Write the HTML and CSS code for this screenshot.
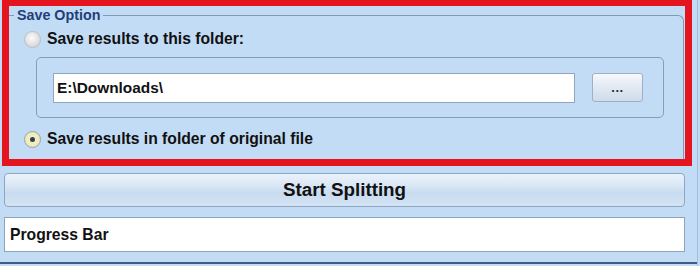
FILE: index.html
```html
<!DOCTYPE html>
<html>
<head>
<meta charset="utf-8">
<link rel="stylesheet" href="styles.css">
</head>
<body>
<div class="window">
  <div class="highlight">
    <fieldset class="group">
      <legend class="legend">Save Option</legend>
      <div class="option">
        <span class="radio"></span>
        <span class="label">Save results to this folder:</span>
      </div>
      <div class="folder-box">
        <div class="field">E:\Downloads\</div>
        <div class="browse">...</div>
      </div>
      <div class="option option-last">
        <span class="radio checked"><span class="dot"></span></span>
        <span class="label">Save results in folder of original file</span>
      </div>
    </fieldset>
  </div>
  <div class="start">Start Splitting</div>
  <div class="progress">Progress Bar</div>
  <div class="window-edge"></div>
</div>
</body>
</html>
```
FILE: styles.css
```css
html, body {
  margin: 0;
  padding: 0;
  background: #c3dcf6;
  font-family: "Liberation Sans", Arial, sans-serif;
  color: #111111;
}

.window {
  width: 697px;
  height: 266px;
  overflow: hidden;
  display: flex;
  flex-direction: column;
  border-right: 1px solid #a4bedb;
}

.highlight {
  margin-left: 2px;
  width: 676px;
  height: 153px;
  border: 7px solid #e4151f;
  border-top-width: 6px;
  display: flex;
  flex-direction: column;
}

.group {
  margin: 0 1px 0 0;
  padding: 0 0 0 5px;
  border: 1px solid #8299b6;
  border-left: none;
  border-bottom: none;
  border-top-right-radius: 6px;
  flex: 1;
  min-width: 0;
}

.legend {
  padding: 0 3px;
  margin-left: 0;
  font-size: 14.3px;
  font-weight: bold;
  line-height: 18px;
  color: #1f3f78;
}

.option {
  display: flex;
  align-items: center;
  height: 18px;
  margin: 6px 0 0 10px;
  gap: 6px;
}

.option-last {
  margin-top: 12px;
}

.label {
  font-size: 15.7px;
  font-weight: bold;
  white-space: nowrap;
}

.radio {
  width: 15px;
  height: 15px;
  border-radius: 50%;
  border: 1px solid #b9bec6;
  background: radial-gradient(circle at 45% 40%, #fbfbfb 0%, #e6e6e6 45%, #c9cbce 100%);
  display: flex;
  align-items: center;
  justify-content: center;
  flex: none;
}

.radio.checked {
  border-color: #9aa3ae;
  background: radial-gradient(circle, #f4f1c8 0%, #f0ecb8 55%, #d6d6c8 100%);
}

.dot {
  width: 5px;
  height: 5px;
  border-radius: 50%;
  background: #2e3d4f;
}

.folder-box {
  margin: 9px 19px 0 22px;
  height: 29px;
  padding: 15px 20px 15px 16px;
  border: 1px solid #8a9cb4;
  border-radius: 5px;
  display: flex;
  align-items: center;
  gap: 17px;
}

.field {
  flex: 1;
  background: #ffffff;
  border: 1px solid #93a6bd;
  display: flex;
  align-items: center;
  padding-left: 3px;
  font-size: 15.4px;
  font-weight: bold;
  box-sizing: border-box;
  height: 30px;
}

.browse {
  width: 51px;
  height: 29px;
  box-sizing: border-box;
  border: 1px solid #9fb0c6;
  border-radius: 3px;
  background: linear-gradient(#f7f9fc 0%, #e3eaf3 45%, #cfdbea 100%);
  display: flex;
  align-items: center;
  justify-content: center;
  font-size: 13px;
  font-weight: bold;
  color: #1e2a38;
  letter-spacing: 0.5px;
}

.start {
  margin: 7px 0 0 4px;
  width: 681px;
  height: 34px;
  box-sizing: border-box;
  border: 1px solid #8ea6c2;
  border-radius: 4px;
  background: linear-gradient(#eaf2fb 0%, #dde9f6 30%, #c9dcf0 60%, #d3e3f4 100%);
  display: flex;
  align-items: center;
  justify-content: center;
  font-size: 18.8px;
  font-weight: bold;
}

.progress {
  margin: 10px 0 0 4px;
  width: 681px;
  height: 35px;
  box-sizing: border-box;
  border: 1px solid #8fa3ba;
  background: #ffffff;
  display: flex;
  align-items: center;
  padding-left: 5px;
  font-size: 15.7px;
  font-weight: bold;
}

.window-edge {
  margin-top: 10px;
  height: 2px;
  background: #3c5b85;
}
```
